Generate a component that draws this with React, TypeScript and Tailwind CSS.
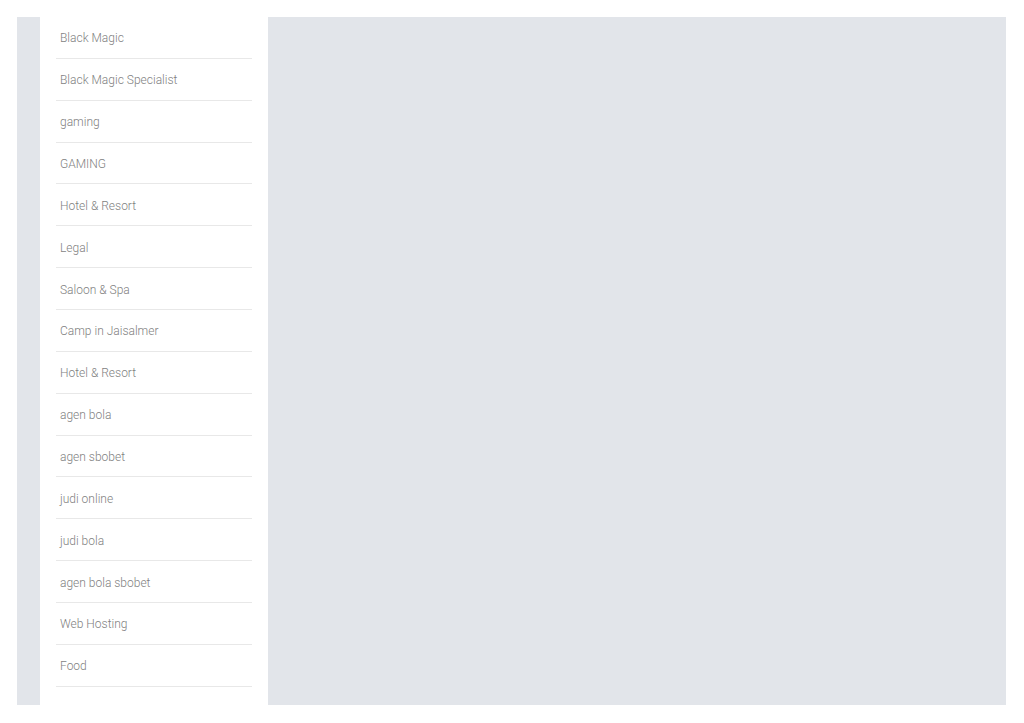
import React from 'react';

const categories = [
  'Black Magic',
  'Black Magic Specialist',
  'gaming',
  'GAMING',
  'Hotel & Resort',
  'Legal',
  'Saloon & Spa',
  'Camp in Jaisalmer',
  'Hotel & Resort',
  'agen bola',
  'agen sbobet',
  'judi online',
  'judi bola',
  'agen bola sbobet',
  'Web Hosting',
  'Food',
];

export default function App() {
  return (
    <div className="h-[723px] w-[1024px] bg-white p-[17px] pr-[18px] font-['Roboto',sans-serif]">
      <div className="flex h-[688px] bg-[#e2e5ea]">
        <div className="ml-[23px] w-[228px] bg-white px-4">
          <ul>
            {categories.map((c, i) => (
              <li
                key={i}
                className="flex h-[41.87px] items-center border-b border-[#e8e8e8] px-1 pt-[2px] text-[12px] font-light text-[#7f7f7f]"
              >
                {c}
              </li>
            ))}
          </ul>
        </div>
        <div className="flex-1" />
      </div>
    </div>
  );
}
